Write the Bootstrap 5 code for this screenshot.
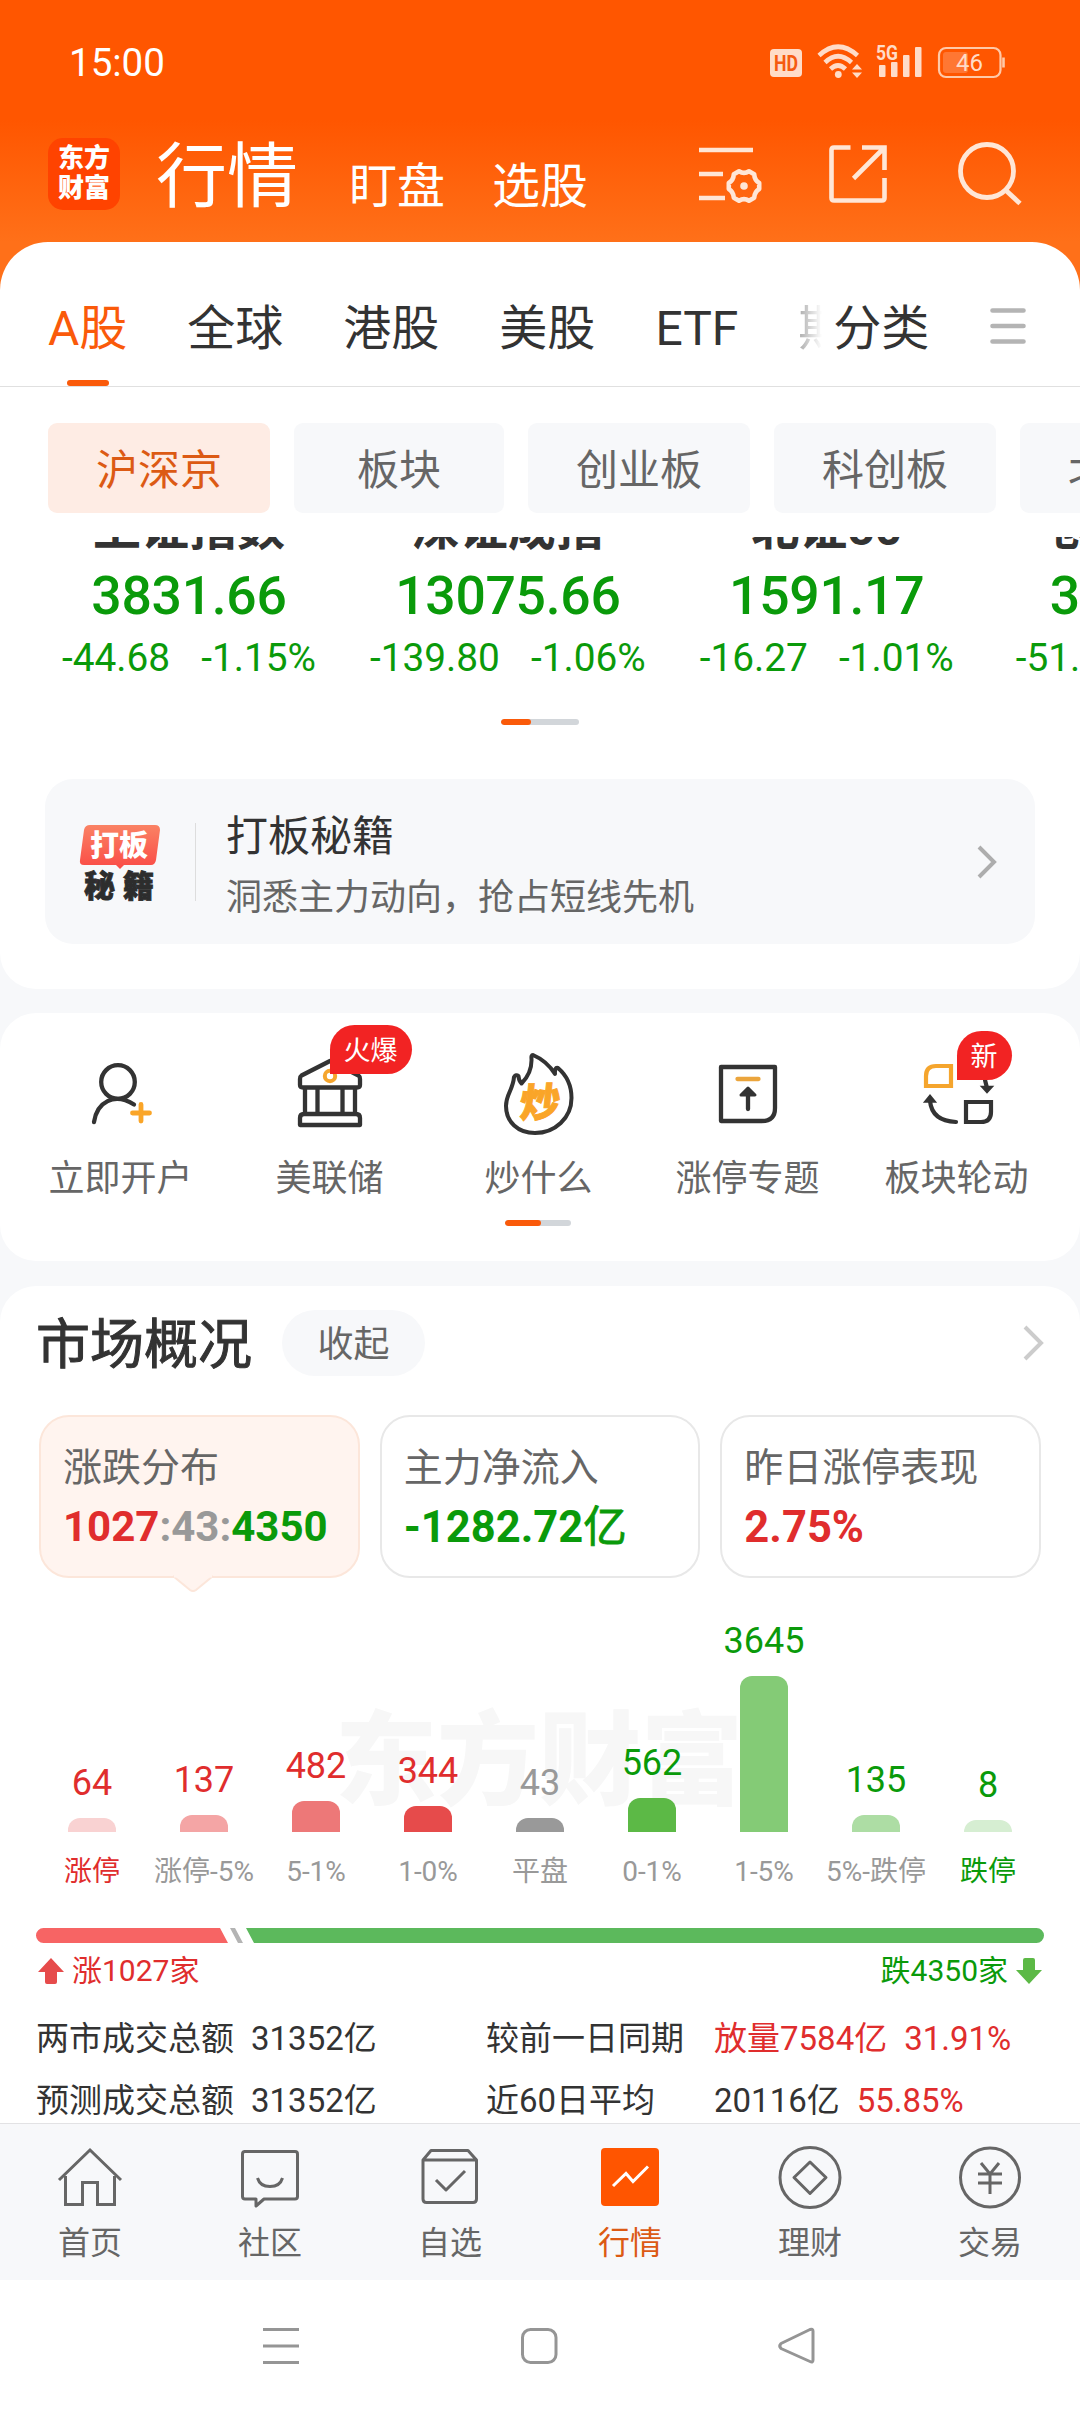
<!DOCTYPE html>
<html lang="zh-CN">
<head>
<meta charset="utf-8">
<meta name="viewport" content="width=device-width, initial-scale=1">
<title>行情</title>
<link href="https://cdn.jsdelivr.net/npm/bootstrap@5.3.0/dist/css/bootstrap.min.css" rel="stylesheet">
<script src="https://cdn.jsdelivr.net/npm/bootstrap@5.3.0/dist/js/bootstrap.bundle.min.js" defer></script>
<style>
:root{--org:#fa5a0a;--up:#e02d2d;--down:#0a9a0a;--ink:#333;--mut:#666;--soft:#f7f8fa}
body{width:1080px;height:2412px;overflow:hidden;background:var(--soft);font-family:Roboto,"Noto Sans CJK SC",sans-serif;line-height:1;color:var(--ink);white-space:nowrap}
svg{display:block;flex:none;overflow:visible}
.c-up{color:var(--up)}.c-down{color:var(--down)}.c-mut{color:var(--mut)}.c-flat{color:#999}.c-ink{color:var(--ink)}
.top{height:290px;background:linear-gradient(#ff5600 0,#ff5600 120px,#ff7019 242px);color:#fff}
.status{height:126px;padding:0 73px 0 69px}
.clock{font-size:38.5px}
.brandbar{height:72px;margin-top:12px;padding-left:48px}
.brandbar svg{margin-top:5px}
.logo{width:72px;height:72px;border-radius:15px;background:#ff4300;font-weight:900;font-size:26px;line-height:30px;padding-top:5px}
.t-main{font-size:71px;margin:3px 0 0 36px;line-height:72px}
.t-sub{font-size:48px;margin-top:25px}
.sheet{background:#fff;border-radius:48px 48px 36px 36px;height:747px;margin-top:-48px}
.tabs{height:145px;border-bottom:1px solid #e0e0e0;padding:63px 0 0 48px;font-size:48px}
.tab-on{color:var(--org)}
.tab-on::after{content:"";display:block;width:42px;height:6px;border-radius:3px;background:var(--org);margin:27px auto 0}
.tabs .fade-cut{width:24px;overflow:hidden;height:60px;color:#aaa;-webkit-mask-image:linear-gradient(90deg,#000,transparent);margin-right:11px}
.chips{gap:24px;padding:36px 0 0 48px;overflow:hidden}
.chip{flex:none;height:90px;width:222px;border-radius:9px;background:var(--soft);color:var(--mut);font-size:42px;padding-top:5px}
.chip-on{background:#feece4;color:#dc5a14}
.quotes{height:145px;margin-top:24px;overflow:hidden;padding-left:62px;gap:54px}
.q-name{font-size:48px;font-weight:700;margin-top:-32px}
.q-val{font-size:53.500px;font-weight:500;margin-top:16px;letter-spacing:-.3px}
.q-chg{font-size:38.800px;gap:31px;margin-top:16px}
.q-part{margin-left:8px}
.q-part .q-name,.q-part .q-val{padding-left:34px}
.pager{height:6px;border-radius:3px;background:#d2d6da;overflow:hidden}
.pager i{display:block;height:6px;border-radius:3px;background:var(--org)}
.promo{margin:54px 45px 0;height:165px;border-radius:28px;background:var(--soft);padding:0 38px 0 32px}
.vr-line{width:1px;height:78px;background:#ddd;margin:0 30px 0 32px}
.quick{height:248px;border-radius:36px;background:#fff;margin-top:24px;padding:39px 19px 0 16px;font-size:36px}
.q-item{flex:1 1 0}
.q-item svg{margin-bottom:22px}
.flag{position:absolute;left:50%;top:-27px;height:49px;border-radius:25px 25px 25px 0;background:#f22323;color:#fff;font-size:27px;padding:3px 14px 0}
.market{border-radius:36px 36px 0 0;background:#fff;margin-top:25px;height:837px;padding:24px 36px 0}
.m-title{font-size:54px;-webkit-text-stroke:1px var(--ink);padding-top:6px}
.m-btn{width:143px;height:66px;border-radius:33px;background:var(--soft);font-size:36px;margin-left:30px;color:var(--mut);padding-top:4px}
.tiles{gap:20px;margin:39px 3px 0}
.tile{flex:1 1 0;height:163px;border:2px solid #e8e8e8;border-radius:30px;padding:32px 0 0 22px;position:relative;font-size:39px;color:var(--mut)}
.tile b{display:block;font-size:43.500px;font-weight:700;margin-top:18px}
.tile-on b{font-size:42px}
.tile-on{background:#fff4ef;border-color:#fce6da}
.tile-on svg{position:absolute;left:132px;top:159px}
.hist{height:308px;position:relative}
.wm{position:absolute;left:299px;top:133px;font-size:102px;font-weight:900;color:#f7f7f7}
.h-col{width:0;flex:1 1 0;position:relative;font-size:36px}
.h-bar{width:48px;border-radius:12px 12px 0 0;margin-top:17px}
.h-lab{font-size:28px;margin-top:26px;height:28px}
.ratio{margin-top:42px}
.legend2{font-size:30px;margin-top:12px;height:32px}
.stats{font-size:33px;row-gap:29px;margin-top:35px}
.st-a{width:450px;gap:17px}.st-b{width:228px}.st-c{gap:17px}
.dock{height:157px;background:var(--soft);border-top:1px solid #e2e2e4;font-size:32px;color:var(--mut)}
.dock>div{flex:1 1 0;padding-top:20px}
.dock svg{margin-bottom:17px}
.sysnav{height:132px;background:#fff}
</style>
</head>
<body>
<header class="top">
  <div class="status d-flex justify-content-between align-items-center">
    <span class="clock">15:00</span>
    <svg width="238" height="36" viewBox="769 45 238 36" fill="#ffdcc8">
      <rect x="770" y="49" width="32" height="28" rx="4"/>
      <text x="786" y="71" font-size="22" font-weight="700" text-anchor="middle" textLength="24" lengthAdjust="spacingAndGlyphs" fill="#f55a10">HD</text>
      <g fill="none" stroke="#ffdcc8" stroke-width="4.6"><path d="M819 55.500Q838 38 857.500 55.500"/><path d="M825 62.500Q838 50 851.500 62.500"/><path d="M830.500 69Q838 62 845.500 69"/></g>
      <circle cx="838.300" cy="74.500" r="3.400"/>
      <path d="M852 69.500L857 64L862 69.500ZM852 72.500L857 78L862 72.500Z"/>
      <text x="876" y="60" font-size="19.500" font-weight="700" textLength="22" lengthAdjust="spacingAndGlyphs">5G</text>
      <rect x="879" y="65" width="6.500" height="12" rx="1"/><rect x="891" y="62" width="6.500" height="15" rx="1"/><rect x="903" y="55" width="6.500" height="22" rx="1"/><rect x="915" y="47" width="6.500" height="30" rx="1"/>
      <rect x="943" y="52" width="25" height="21" rx="3" fill="#ff7733"/>
      <rect x="939" y="48" width="61.500" height="29" rx="7" fill="none" stroke="#ffc9a8" stroke-width="2.200"/>
      <path d="M1003.500 57.500V67.500" stroke="#ffc9a8" stroke-width="2.600"/>
      <text x="969.500" y="71" font-size="24" text-anchor="middle">46</text>
    </svg>
  </div>
  <div class="brandbar d-flex align-items-start">
    <div class="logo text-center">东方<br>财富</div>
    <span class="t-main">行情</span><span class="t-sub" style="margin-left:51px">盯盘</span><span class="t-sub" style="margin-left:47px">选股</span>
    <svg width="66" height="60" style="margin-left:108px" viewBox="696 143 66 60" fill="none" stroke="#ffe6d6" stroke-width="4.600">
      <path d="M699 150H753M699 174H723M699 198H725"/>
      <path transform="translate(744,186)" stroke-linejoin="round" d="M15.200-3L15.200 3Q10.500 6 10.200 11.700L5 14.700Q0 11.500-5 14.700L-10.200 11.700Q-10.500 6-15.200 3L-15.200-3Q-10.500-6-10.200-11.700L-5-14.700Q0-11.500 5-14.700L10.200-11.700Q10.500-6 15.200-3Z"/>
      <circle cx="744" cy="186" r="3.800" fill="#ffe6d6" stroke="none"/>
    </svg>
    <svg width="60" height="60" style="margin-left:66px" viewBox="828 143 60 60" fill="none" stroke="#ffe6d6" stroke-width="4.600">
      <path d="M850.500 147.500H834Q831.500 147.500 831.500 150V198Q831.500 200.500 834 200.500H882Q884.500 200.500 884.500 198V178M862 147.500H884.500V170M884 148L853.500 178.500"/>
    </svg>
    <svg width="68" height="62" style="margin-left:68px" viewBox="956 143 68 62" fill="none" stroke="#ffe6d6" stroke-width="4.800">
      <circle cx="987" cy="171" r="26.500"/><path d="M1005.500 190L1020 203.500"/>
    </svg>
  </div>
</header>

<section class="sheet">
  <div class="tabs d-flex">
    <div class="tab-on">A股</div><div style="margin-left:60px">全球</div><div style="margin-left:60px">港股</div><div style="margin-left:60px">美股</div><div style="margin-left:60px">ETF</div><div class="fade-cut" style="margin-left:60px">期</div><div>分类</div>
    <svg width="36" height="36" viewBox="0 0 36 36" style="margin:3px 0 0 61px" stroke="#b4b4b4" stroke-width="4.600" stroke-linecap="round"><path d="M2.500 2.500H33.500M2.500 18H33.500M2.500 33.500H33.500"/></svg>
  </div>
  <div class="chips d-flex">
    <div class="chip chip-on d-flex align-items-center justify-content-center">沪深京</div>
    <div class="chip d-flex align-items-center justify-content-center" style="width:210px">板块</div>
    <div class="chip d-flex align-items-center justify-content-center">创业板</div>
    <div class="chip d-flex align-items-center justify-content-center">科创板</div>
    <div class="chip d-flex align-items-center justify-content-center">北交所</div>
  </div>
  <div class="quotes d-flex c-down">
    <div class="text-center"><div class="q-name c-ink">上证指数</div><div class="q-val">3831.66</div><div class="q-chg d-flex"><span>-44.68</span><span>-1.15%</span></div></div>
    <div class="text-center"><div class="q-name c-ink">深证成指</div><div class="q-val">13075.66</div><div class="q-chg d-flex"><span>-139.80</span><span>-1.06%</span></div></div>
    <div class="text-center"><div class="q-name c-ink">北证50</div><div class="q-val">1591.17</div><div class="q-chg d-flex"><span>-16.27</span><span>-1.01%</span></div></div>
    <div class="q-part"><div class="q-name c-ink">创业</div><div class="q-val">30</div><div class="q-chg d-flex"><span>-51.</span></div></div>
  </div>
  <div class="pager mx-auto" style="width:78px;margin-top:37px"><i style="width:30px"></i></div>
  <div class="promo d-flex align-items-center">
    <svg width="86" height="80" viewBox="77 821 86 80" font-family="Noto Sans CJK SC" font-weight="900">
      <defs><linearGradient id="gr" x2="0" y2="1"><stop stop-color="#fa8264"/><stop offset="1" stop-color="#fa4b46"/></linearGradient></defs>
      <path fill="url(#gr)" d="M90 824H155Q160 824 160 829L156 859Q155 864 151 864H124L120 868L116 864H84Q79 864 80 859L84 829Q85 824 90 824Z"/>
      <text x="90" y="855" font-size="29" fill="#fff">打板</text>
      <text x="84" y="895.500" font-size="31" fill="#2d2d2d" textLength="70" stroke="#2d2d2d" stroke-width=".8">秘籍</text>
    </svg>
    <div class="vr-line"></div>
    <div class="flex-grow-1 pt-2"><div style="font-size:42px;margin-bottom:22px">打板秘籍</div><div class="c-mut" style="font-size:36px">洞悉主力动向，抢占短线先机</div></div>
    <svg width="20" height="34" viewBox="0 0 20 34" fill="none" stroke="#adadad" stroke-width="4"><path d="M2 2L17 17L2 32"/></svg>
  </div>
</section>

<section class="quick">
  <div class="d-flex c-mut">
    <div class="q-item d-flex flex-column align-items-center">
      <svg width="100" height="87" viewBox="71 1052 100 87" fill="none" stroke="#333" stroke-width="4.300" stroke-linecap="round"><circle cx="118" cy="1082" r="16.800"/><path d="M94 1122C97 1102 114 1092 134 1104.500"/><path stroke="#faa528" stroke-width="4.800" d="M132.500 1113H149.500M141 1104.500V1121"/></svg>
      <span>立即开户</span>
    </div>
    <div class="q-item d-flex flex-column align-items-center position-relative">
      <svg width="100" height="87" viewBox="281 1052 100 87" fill="none" stroke="#333" stroke-width="4.300" stroke-linejoin="round"><path d="M331 1061L302.500 1075.500Q301 1076.500 301 1079V1085Q301 1087.500 304 1087.500H358Q361 1087.500 361 1085V1079Q361 1076.500 359.500 1075.500ZM306 1088V1113M318.500 1088V1113M343.500 1088V1113M356 1088V1113M301 1125V1118Q301 1114 305 1114H357Q361 1114 361 1118V1125Z"/><circle cx="331" cy="1076" r="5.200" stroke="#f5a52d" stroke-width="4"/></svg>
      <span>美联储</span>
      <div class="flag d-flex align-items-center">火爆</div>
    </div>
    <div class="q-item d-flex flex-column align-items-center">
      <svg width="100" height="87" viewBox="490 1052 100 87"><path fill="none" stroke="#333" stroke-width="4" stroke-linejoin="round" d="M534 1055Q532 1055 532.500 1059Q533 1073 522.500 1083.500Q519.500 1080 519.500 1076Q517 1074 515 1077C514 1090 507 1094 507 1106C507 1122 519 1133 536 1133C556 1133 572.500 1118 572.500 1098C572.500 1084 566 1074 559 1068Q555.500 1067 556 1074Q548 1061 534 1055Z"/><text x="540" y="1117" font-size="40" font-weight="900" font-family="Noto Sans CJK SC" fill="#faa528" stroke="#faa528" text-anchor="middle" transform="translate(117 0) skewX(-6)">炒</text></svg>
      <span>炒什么</span>
    </div>
    <div class="q-item d-flex flex-column align-items-center">
      <svg width="100" height="87" viewBox="699 1052 100 87" fill="none" stroke="#333" stroke-width="4.300" stroke-linecap="round" stroke-linejoin="round"><path d="M722 1067H776V1108Q776 1121 763 1121H722Z"/><path d="M738.500 1079H759.500" stroke="#eba53c"/><path d="M749 1092V1109"/><path d="M742 1095L749 1088L756 1095Z" fill="#333" stroke-width="3"/></svg>
      <span>涨停专题</span>
    </div>
    <div class="q-item d-flex flex-column align-items-center position-relative">
      <svg width="100" height="87" viewBox="907 1052 100 87" fill="none" stroke="#333" stroke-width="4.200" stroke-linecap="round"><path stroke="#f5a52d" d="M926 1086V1076Q926 1066 936 1066H951V1086Z"/><path d="M966 1102H991V1112Q991 1122 981 1122H966ZM956 1122Q932 1121 930 1101M985 1080L987 1088"/><path d="M925.500 1101.500L930 1096L934.500 1101.500ZM982.500 1087L987 1092L991.500 1087Z" fill="#333" stroke-width="2.500"/></svg>
      <span>板块轮动</span>
      <div class="flag d-flex align-items-center" style="top:-21px">新</div>
    </div>
  </div>
  <div class="pager mx-auto" style="width:66px;margin-top:23px;position:relative;left:-1px"><i style="width:36px"></i></div>
</section>

<section class="market">
  <div class="d-flex align-items-center"><span class="m-title">市场概况</span><div class="m-btn d-flex align-items-center justify-content-center">收起</div>
    <svg class="ms-auto" width="22" height="36" viewBox="0 0 22 36" fill="none" stroke="#ccc" stroke-width="4"><path d="M3 2L19 18L3 34"/></svg></div>
  <div class="tiles d-flex">
    <div class="tile tile-on">涨跌分布<b><span class="c-up">1027</span><span class="c-flat">:43:</span><span class="c-down">4350</span></b>
      <svg width="40" height="18" viewBox="0 0 40 18"><path d="M0 0L17 14Q20 16 23 14L40 0" fill="#fff4ef" stroke="#fce6da" stroke-width="2"/><path d="M1 0H39" stroke="#fff4ef" stroke-width="3"/></svg></div>
    <div class="tile">主力净流入<b class="c-down">-1282.72<span class="fw-normal" style="-webkit-text-stroke:.8px">亿</span></b></div>
    <div class="tile">昨日涨停表现<b class="c-up">2.75%</b></div>
  </div>
  <div class="hist">
    <div class="wm">东方财富</div>
    <div class="d-flex align-items-end h-100">
      <div class="h-col d-flex flex-column align-items-center c-up">64<div class="h-bar" style="height:14px;background:#f9d2d2"></div><span class="h-lab">涨停</span></div>
      <div class="h-col d-flex flex-column align-items-center c-up">137<div class="h-bar" style="height:17px;background:#f4a5a5"></div><span class="h-lab c-flat">涨停-5%</span></div>
      <div class="h-col d-flex flex-column align-items-center c-up">482<div class="h-bar" style="height:31px;background:#ed7878"></div><span class="h-lab c-flat">5-1%</span></div>
      <div class="h-col d-flex flex-column align-items-center c-up">344<div class="h-bar" style="height:26px;background:#e64b4b"></div><span class="h-lab c-flat">1-0%</span></div>
      <div class="h-col d-flex flex-column align-items-center c-flat">43<div class="h-bar" style="height:14px;background:#999"></div><span class="h-lab">平盘</span></div>
      <div class="h-col d-flex flex-column align-items-center c-down">562<div class="h-bar" style="height:34px;background:#5cb946"></div><span class="h-lab c-flat">0-1%</span></div>
      <div class="h-col d-flex flex-column align-items-center c-down">3645<div class="h-bar" style="height:156px;background:#84cb76"></div><span class="h-lab c-flat">1-5%</span></div>
      <div class="h-col d-flex flex-column align-items-center c-down">135<div class="h-bar" style="height:17px;background:#addda4"></div><span class="h-lab c-flat">5%-跌停</span></div>
      <div class="h-col d-flex flex-column align-items-center c-down">8<div class="h-bar" style="height:12px;background:#d6eed2"></div><span class="h-lab">跌停</span></div>
    </div>
  </div>
  <svg class="ratio" width="1008" height="15" viewBox="0 0 1008 15"><path fill="#f76464" d="M7.500 0H184L192 15H7.500A7.500 7.500 0 010 7.500A7.500 7.500 0 017.500 0"/><path fill="#b4b4b4" d="M194 0H199L207 15H202Z"/><path fill="#5cb95c" d="M210 0H1000.500A7.500 7.500 0 011008 7.500A7.500 7.500 0 011000.500 15H218Z"/></svg>
  <div class="legend2 d-flex justify-content-between align-items-center">
    <div class="d-flex align-items-center c-up"><svg width="28" height="27" viewBox="0 0 28 27"><path fill="#e64b4b" d="M15 0L28 14H21V24Q21 26 19 26H11Q9 26 9 24V14H2Z"/></svg><span style="margin-left:8px">涨1027家</span></div>
    <div class="d-flex align-items-center c-down"><span>跌4350家</span><svg width="28" height="26" viewBox="0 0 28 26" style="margin-left:8px"><path fill="#5cb946" d="M13 26L0 12H7V2Q7 0 9 0H17Q19 0 19 2V12H26Z"/></svg></div>
  </div>
  <div class="stats d-flex flex-column">
    <div class="d-flex"><div class="st-a d-flex"><span>两市成交总额</span><span>31352亿</span></div><div class="st-b">较前一日同期</div><div class="st-c d-flex c-up"><span>放量7584亿</span><span>31.91%</span></div></div>
    <div class="d-flex"><div class="st-a d-flex"><span>预测成交总额</span><span>31352亿</span></div><div class="st-b">近60日平均</div><div class="st-c d-flex"><span>20116亿</span><span class="c-up">55.85%</span></div></div>
  </div>
</section>

<nav class="dock d-flex">
  <div class="d-flex flex-column align-items-center"><svg width="66" height="66" viewBox="0 0 66 66" fill="none" stroke="#666" stroke-width="3"><path d="M2 36L33 6L64 36M8.500 32V60.500H25.500V38.500H40.500V60.500H57.500V32"/></svg>首页</div>
  <div class="d-flex flex-column align-items-center"><svg width="66" height="66" viewBox="0 0 66 66" fill="none" stroke="#666" stroke-width="3" stroke-linejoin="round"><path d="M7 7.500H58Q60.500 7.500 60.500 10V52.500Q60.500 55 58 55H27L19 62V55H8Q5.500 55 5.500 52.500V10Q5.500 7.500 8 7.500M20.500 34Q23 42.500 33 42.500Q43 42.500 45.500 34"/></svg>社区</div>
  <div class="d-flex flex-column align-items-center"><svg width="66" height="66" viewBox="0 0 66 66" fill="none" stroke="#666" stroke-width="3" stroke-linejoin="round"><path d="M6 16L14 6.500H51L59.500 16V55Q59.500 58.500 56 58.500H9.500Q6 58.500 6 55ZM6 16H59.500M19 36L29 46L48 27"/></svg>自选</div>
  <div class="d-flex flex-column align-items-center" style="color:#dc5a14"><svg width="66" height="66" viewBox="0 0 66 66"><rect x="4" y="4" width="58" height="58" rx="4" fill="#ff5500"/><path d="M16 42L29 29.500L36 37.500L51 22.500" fill="none" stroke="#fff" stroke-width="3"/></svg>行情</div>
  <div class="d-flex flex-column align-items-center"><svg width="66" height="66" viewBox="0 0 66 66" fill="none" stroke="#666" stroke-width="3" stroke-linejoin="round"><circle cx="33" cy="33.500" r="30"/><path d="M33 18L49 33.500L33 49.500L17 33.500Z"/></svg>理财</div>
  <div class="d-flex flex-column align-items-center"><svg width="66" height="66" viewBox="0 0 66 66" fill="none" stroke="#666" stroke-width="3"><circle cx="33" cy="33.500" r="29.500"/><path d="M24 19L33 30L42 19M21 30H45M21 39H45M33 30V50"/></svg>交易</div>
</nav>
<div class="sysnav d-flex justify-content-center">
  <svg width="554" height="40" viewBox="262 2326 554 40" fill="none" stroke="#959595" stroke-width="3" style="margin-top:46px;margin-left:-2px"><path d="M263 2329.500H299M263 2346H299M263 2362.500H299"/><rect x="522.500" y="2329.500" width="33.500" height="33" rx="8"/><path stroke-linejoin="round" d="M781 2343.500L810 2329.500Q813 2328.500 813 2331V2360Q813 2363 810 2361.500L781 2348.500Q778.500 2346 781 2343.500Z"/></svg>
</div>
</body>
</html>
